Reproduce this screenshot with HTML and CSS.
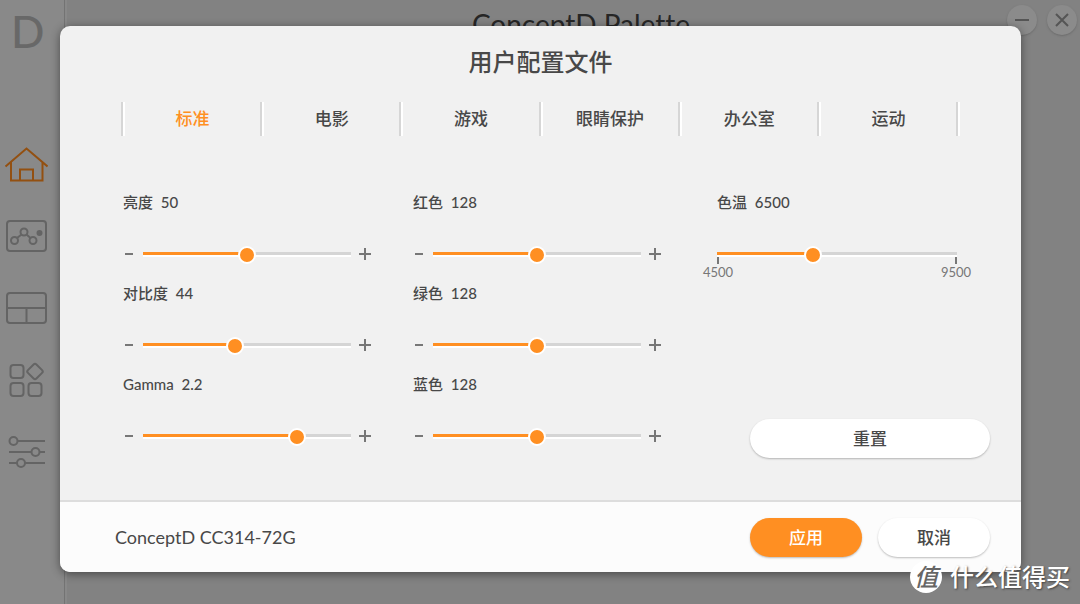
FILE: index.html
```html
<!DOCTYPE html>
<html lang="zh-CN">
<head>
<meta charset="utf-8">
<meta name="viewport" content="width=device-width, initial-scale=1">
<title>ConceptD Palette</title>
<link rel="stylesheet" href="styles.css">
</head>
<body>
<div class="app">
  <aside class="sidebar">
    <div class="logo">D</div>
    <nav class="side-nav">
      <a class="side-link side-link-active" href="#home" aria-label="主页">
        <svg viewBox="0 0 44 40"><path d="M1.5 22.5 22.5 4.5 43.5 22.5M7 18v18.500h31.500V18M16 36.500V25.500h13v11"/></svg>
      </a>
      <a class="side-link" href="#profile" aria-label="色彩">
        <svg viewBox="0 0 44 40"><rect x="3" y="5" width="39" height="30" rx="3"/><circle cx="10.500" cy="24.500" r="3.500"/><circle cx="20" cy="16" r="3.500"/><circle cx="29" cy="24.500" r="3.500"/><path d="m13 22 4.500-3.500M22.500 18.500 26.500 22"/><circle class="dot" cx="35.500" cy="17" r="2"/></svg>
      </a>
      <a class="side-link" href="#layout" aria-label="布局">
        <svg viewBox="0 0 44 40"><rect x="3" y="5" width="39" height="30" rx="3"/><path d="M3 20h39M22.500 20v15"/></svg>
      </a>
      <a class="side-link" href="#apps" aria-label="应用程序">
        <svg viewBox="0 0 44 40"><rect x="6.500" y="5" width="13" height="13" rx="3"/><rect x="6.500" y="23" width="13" height="13" rx="3"/><rect x="24.500" y="23" width="13" height="13" rx="3"/><rect x="25" y="5.500" width="12" height="12" rx="2" transform="rotate(45 31 11.500)"/></svg>
      </a>
      <a class="side-link" href="#settings" aria-label="设置">
        <svg viewBox="0 0 44 40"><circle cx="9.500" cy="9" r="4"/><circle cx="31.500" cy="20" r="4"/><circle cx="17" cy="31" r="4"/><path d="M13.500 9H41M5 20h22.500M35.500 20H41M5 31h8M21 31h20"/></svg>
      </a>
    </nav>
  </aside>
  <main class="main">
    <h1 class="app-title">ConceptD Palette</h1>
    <div class="window-controls">
      <button class="window-button" type="button" aria-label="最小化"><svg viewBox="0 0 30 30"><path d="M8 15h14"/></svg></button>
      <button class="window-button" type="button" aria-label="关闭"><svg viewBox="0 0 30 30"><path d="m9 9 12 12M21 9 9 21"/></svg></button>
    </div>
  </main>
</div>

<section class="modal" role="dialog" aria-modal="true" aria-labelledby="modal-title">
  <h2 class="modal-title" id="modal-title">用户配置文件</h2>
  <div class="tabs" role="tablist">
    <button class="tab tab-active" type="button" role="tab" aria-selected="true">标准</button>
    <button class="tab" type="button" role="tab" aria-selected="false">电影</button>
    <button class="tab" type="button" role="tab" aria-selected="false">游戏</button>
    <button class="tab" type="button" role="tab" aria-selected="false">眼睛保护</button>
    <button class="tab" type="button" role="tab" aria-selected="false">办公室</button>
    <button class="tab" type="button" role="tab" aria-selected="false">运动</button>
  </div>

  <div class="settings">
    <div class="column column-general">
      <div class="field">
        <label class="field-label" for="brightness">亮度 <output>50</output></label>
        <div class="field-row">
          <button class="step" type="button" aria-label="降低亮度"><svg viewBox="0 0 12 12"><path d="M2 6h8"/></svg></button>
          <input class="slider" id="brightness" type="range" min="0" max="100" value="50" style="--fill:.5">
          <button class="step step-plus" type="button" aria-label="提高亮度"><svg viewBox="0 0 12 12"><path d="M0 6h12M6 0v12"/></svg></button>
        </div>
      </div>
      <div class="field">
        <label class="field-label" for="contrast">对比度 <output>44</output></label>
        <div class="field-row">
          <button class="step" type="button" aria-label="降低对比度"><svg viewBox="0 0 12 12"><path d="M2 6h8"/></svg></button>
          <input class="slider" id="contrast" type="range" min="0" max="100" value="44" style="--fill:.44">
          <button class="step step-plus" type="button" aria-label="提高对比度"><svg viewBox="0 0 12 12"><path d="M0 6h12M6 0v12"/></svg></button>
        </div>
      </div>
      <div class="field">
        <label class="field-label" for="gamma">Gamma <output>2.2</output></label>
        <div class="field-row">
          <button class="step" type="button" aria-label="降低 Gamma"><svg viewBox="0 0 12 12"><path d="M2 6h8"/></svg></button>
          <input class="slider" id="gamma" type="range" min="0.5" max="2.8" step="0.1" value="2.2" style="--fill:.74">
          <button class="step step-plus" type="button" aria-label="提高 Gamma"><svg viewBox="0 0 12 12"><path d="M0 6h12M6 0v12"/></svg></button>
        </div>
      </div>
    </div>

    <div class="column column-rgb">
      <div class="field">
        <label class="field-label" for="red">红色 <output>128</output></label>
        <div class="field-row">
          <button class="step" type="button" aria-label="减少红色"><svg viewBox="0 0 12 12"><path d="M2 6h8"/></svg></button>
          <input class="slider" id="red" type="range" min="0" max="256" value="128" style="--fill:.5">
          <button class="step step-plus" type="button" aria-label="增加红色"><svg viewBox="0 0 12 12"><path d="M0 6h12M6 0v12"/></svg></button>
        </div>
      </div>
      <div class="field">
        <label class="field-label" for="green">绿色 <output>128</output></label>
        <div class="field-row">
          <button class="step" type="button" aria-label="减少绿色"><svg viewBox="0 0 12 12"><path d="M2 6h8"/></svg></button>
          <input class="slider" id="green" type="range" min="0" max="256" value="128" style="--fill:.5">
          <button class="step step-plus" type="button" aria-label="增加绿色"><svg viewBox="0 0 12 12"><path d="M0 6h12M6 0v12"/></svg></button>
        </div>
      </div>
      <div class="field">
        <label class="field-label" for="blue">蓝色 <output>128</output></label>
        <div class="field-row">
          <button class="step" type="button" aria-label="减少蓝色"><svg viewBox="0 0 12 12"><path d="M2 6h8"/></svg></button>
          <input class="slider" id="blue" type="range" min="0" max="256" value="128" style="--fill:.5">
          <button class="step step-plus" type="button" aria-label="增加蓝色"><svg viewBox="0 0 12 12"><path d="M0 6h12M6 0v12"/></svg></button>
        </div>
      </div>
    </div>

    <div class="column column-temperature">
      <div class="field field-temperature">
        <label class="field-label" for="temperature">色温 <output>6500</output></label>
        <div class="field-row">
          <input class="slider" id="temperature" type="range" min="4500" max="9500" step="100" value="6500" style="--fill:.4">
        </div>
        <div class="scale"><span class="scale-mark">4500</span><span class="scale-mark">9500</span></div>
      </div>
      <button class="button button-reset" type="button">重置</button>
    </div>
  </div>

  <footer class="modal-footer">
    <span class="device">ConceptD CC314-72G</span>
    <button class="button button-primary" type="button">应用</button>
    <button class="button" type="button">取消</button>
  </footer>
</section>

<div class="watermark"><span class="watermark-badge">值</span><span>什么值得买</span></div>
</body>
</html>
```

FILE: styles.css
```css
* {
  box-sizing: border-box;
}

:root {
  --orange: #ff8f22;
  --text: #484848;
}

body {
  margin: 0;
  color: var(--text);
  font-family: Lato, "Noto Sans CJK SC", sans-serif;
  font-size: 15px;
  font-variant-ligatures: none;
}

button {
  padding: 0;
  border: 0;
  background: none;
  color: inherit;
  font: inherit;
  cursor: pointer;
}

svg {
  display: block;
  fill: none;
  stroke: currentColor;
}

.app {
  display: flex;
  min-height: 100vh;
  background: #828282;
}

.sidebar {
  width: 67px;
  border-right: 2px solid #888;
  background: #898989;
  box-shadow: inset -1px 0 #737373;
  color: #646464;
}

.logo {
  height: 128px;
  padding: 4px 0 0 11px;
  color: #686868;
  font-size: 44px;
  font-weight: 500;
  line-height: 54px;
}

.side-link {
  display: flex;
  align-items: center;
  height: 72px;
  padding-left: 4px;
  color: inherit;
}

.side-link svg {
  width: 44px;
  height: 40px;
  stroke-width: 2;
}

.side-link-active {
  color: #935011;
}

.dot {
  fill: currentColor;
}

.main {
  display: flex;
  flex: 1;
  align-items: flex-start;
}

.app-title {
  flex: 1;
  margin: 0;
  padding: 4px 0 0 88px;
  color: #262626;
  font-size: 28px;
  font-weight: 400;
  line-height: 40px;
  text-align: center;
}

.window-controls {
  display: flex;
  gap: 10px;
  padding: 5px 3px 0 0;
}

.window-button {
  width: 30px;
  height: 30px;
  border-radius: 50%;
  background: #8b8b8b;
  box-shadow: 0 1px 2px #6c6c6c;
  color: #555;
}

.window-button svg {
  stroke-width: 2;
}

.modal {
  position: absolute;
  inset: 26px 59px 32px 60px;
  display: flex;
  flex-direction: column;
  overflow: hidden;
  border-radius: 10px;
  background: #f1f1f1;
  box-shadow: 0 2px 10px rgba(0, 0, 0, 0.45);
}

.modal-title {
  margin: 0;
  padding-top: 20px;
  font-size: 24px;
  font-weight: 500;
  line-height: 32px;
  text-align: center;
}

.tabs {
  display: flex;
  height: 34px;
  margin: 24px 61px 0;
}

.tabs::after {
  width: 4px;
  background: linear-gradient(90deg, #d6d6d6 50%, #fff 50%);
  content: "";
}

.tab {
  flex: 1;
  padding: 0 0 4px 4px;
  background: linear-gradient(90deg, #d6d6d6 2px, #fff 2px 4px, transparent 4px);
  font-size: 17px;
  font-weight: 500;
}

.tab-active {
  color: var(--orange);
}

.settings {
  display: grid;
  flex: 1;
  grid-template-columns: 290fr 304fr 273fr;
  padding: 56px 31px 42px 63px;
}

.column {
  display: flex;
  flex-direction: column;
  gap: 19px;
}

.column-general {
  padding-right: 42px;
}

.column-rgb {
  padding-right: 56px;
}

.column-temperature {
  justify-content: space-between;
}

.field-temperature {
  padding-right: 33px;
}

.field-label {
  display: block;
  font-weight: 500;
  line-height: 20px;
}

.field-label output {
  margin-left: 4px;
}

.field-row {
  display: flex;
  align-items: center;
  height: 20px;
  margin-top: 32px;
}

.step {
  display: flex;
  width: 20px;
  height: 20px;
  align-items: center;
  color: #777;
}

.step svg {
  width: 12px;
  height: 12px;
  stroke-width: 2;
}

.step-plus {
  justify-content: flex-end;
}

/* The input reaches half a thumb past each end of its visible track. */
.slider {
  flex: 1;
  min-width: 0;
  height: 20px;
  margin: 0 -9px;
  appearance: none;
  background:
    linear-gradient(var(--orange), var(--orange)) 9px 8px / calc((100% - 18px) * var(--fill)) 3px no-repeat,
    linear-gradient(#d5d5d5 3px, #fff 3px) 9px 8px / calc(100% - 18px) 5px no-repeat;
}

/* The thumb hangs slightly lower than the track. */
.slider::-webkit-slider-thumb {
  width: 18px;
  height: 18px;
  margin-top: 2px;
  appearance: none;
  border: 2px solid #fff;
  border-radius: 50%;
  background: var(--orange);
}

.scale {
  display: flex;
  justify-content: space-between;
  margin: -7px -15px 0;
  color: #777;
  font-size: 13px;
  line-height: 16px;
}

.scale-mark {
  width: 32px;
  text-align: center;
}

.scale-mark::before {
  display: block;
  width: 2px;
  height: 7px;
  margin: 0 auto;
  background: #777;
  content: "";
}

.button {
  width: 112px;
  height: 39px;
  padding-bottom: 2px;
  border-radius: 20px;
  background: #fff;
  box-shadow: 0 1px 2px rgba(0, 0, 0, 0.25);
  font-size: 17px;
  font-weight: 500;
}

.button-reset {
  width: auto;
  margin-left: 33px;
}

.button-primary {
  background: var(--orange);
  color: #fff;
}

.modal-footer {
  display: flex;
  align-items: center;
  gap: 16px;
  height: 72px;
  padding: 0 31px 0 55px;
  border-top: 2px solid #ddd;
  background: #fcfcfc;
}

.device {
  flex: 1;
  font-size: 18px;
}

.watermark {
  position: absolute;
  right: 10px;
  bottom: 10px;
  display: flex;
  align-items: center;
  gap: 8px;
  color: #fff;
  font-size: 24px;
  font-weight: 500;
  line-height: 34px;
  text-shadow: 1px 1px 2px #444;
}

.watermark-badge {
  width: 32px;
  height: 32px;
  border-radius: 50%;
  background: #fff;
  color: #666;
  font-style: italic;
  line-height: 32px;
  text-align: center;
  text-shadow: none;
}
```
